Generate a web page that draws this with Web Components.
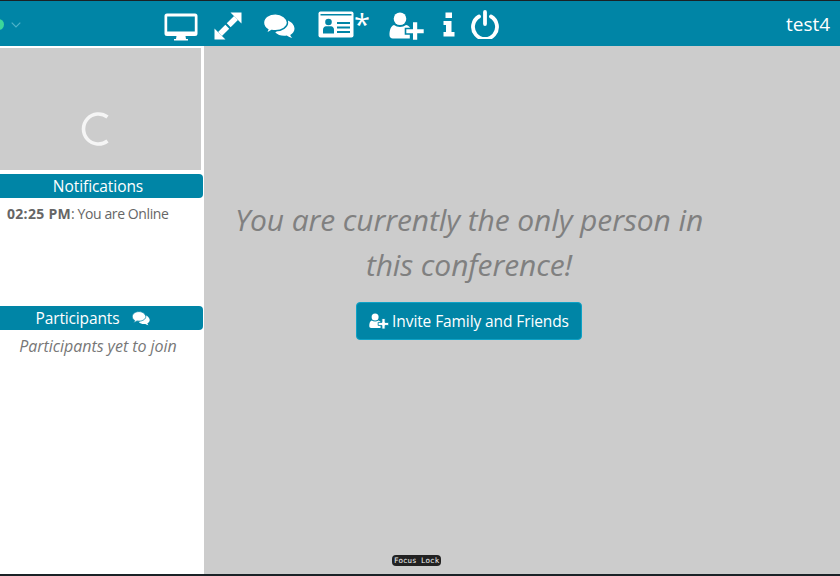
<!DOCTYPE html>
<html><head><meta charset="utf-8">
<style>
html,body{margin:0;padding:0;height:100%;overflow:hidden;background:#ccc}
body{font-family:"Open Sans","Noto Sans",sans-serif}
</style></head><body>
<conf-app>
  <top-bar slot="top" user="test4"></top-bar>
  <side-panel slot="side"></side-panel>
  <stage-area slot="main"></stage-area>
</conf-app>
<script>
const COMMENTS='<path fill="#fff" d="M25 7.500c3.600 1.600 6.500 4.600 6.500 8.200 0 2.600-1.700 4.800-4.300 6.200.4 1 1 2 2 3-2-.3-3.900-1.100-5.400-2.300-.9.200-1.800.2-2.700.2-3.600 0-6.800-1.300-8.800-3.300Z"/><path fill="#fff" stroke="#0085a6" stroke-width="1.400" d="M12.500.700C6 .700.500 4.500.500 9.700c0 2.800 1.700 5.200 4.300 6.800-.4 1.300-1.200 2.500-2.300 3.600 2.300-.3 4.600-1.300 6.300-2.700 1.100.2 2.300.3 3.700.3 6.500 0 12-3.700 12-8S19 .700 12.500.700Z"/>';
const USERPLUS='<circle cx="11" cy="6.800" r="6.300" fill="#fff"/><path fill="#fff" d="M5 13c1.700 1.300 3.700 2 6 2s4.300-.7 6-2c1.500.3 2.800 1 3.800 2.200V26.500H3.800C1.800 26.500.500 25 .500 23c0-4.500 1-8.800 4.500-10Z"/><path fill="#fff" stroke="#0085a6" stroke-width="1.600" d="M23.200 9.500H29V16.500H35.500V22H29V28.500H23.200V22H16.500V16.500H23.200Z"/>';
const ICONS={
 desktop:'<svg width="34" height="28" viewBox="0 0 34 28"><path fill="#fff" fill-rule="evenodd" d="M3 0.500H31A2.500 2.500 0 0 1 33.500 3V20.500A2.500 2.500 0 0 1 31 23H21.500L22 26H24V27.500H10V26H12L12.500 23H3A2.500 2.500 0 0 1 .5 20.500V3A2.500 2.500 0 0 1 3 .5ZM3.200 3.500V18.500H30.800V3.500Z"/></svg>',
 expand:'<svg width="28" height="28" viewBox="0 0 28 28"><path fill="#fff" d="M16.500 .5H27.500V11.500ZM.5 16.500L11.500 27.500H.5Z"/><path stroke="#fff" stroke-width="5.500" d="M22 6 14.700 13.300M6 22 13.300 14.700"/></svg>',
 comments:'<svg width="32" height="26" viewBox="0 0 32 26">'+COMMENTS+'</svg>',
 card:'<svg width="36" height="27" viewBox="0 0 36 27"><rect x=".5" y=".5" width="35" height="26" rx="2" fill="#fff"/><path fill="#0085a6" d="M2.500 3H33.500V4.500H2.500Z"/><circle cx="10.500" cy="11" r="3.300" fill="#0085a6"/><path fill="#0085a6" d="M5 22.500V18.500c0-2 1.500-3.300 3-3.300h5c1.500 0 3 1.300 3 3.300v4Z"/><path fill="#0085a6" d="M19 11H32V13H19ZM19 15.500H32V17.500H19ZM19 20H32V22H19Z"/></svg>',
 userplus:'<svg width="36" height="28" viewBox="0 0 36 28">'+USERPLUS+'</svg>',
 info:'<svg width="12" height="25" viewBox="0 0 12 25"><path fill="#fff" d="M2.500 .5H9V6H2.500ZM.5 9H8.500V20H11.500V24.500H.5V20H3V13H.5Z"/></svg>',
 power:'<svg width="28" height="29" viewBox="0 0 28 29"><path fill="none" stroke="#fff" stroke-width="3.800" stroke-linecap="round" d="M8 6.500A12 12 0 1 0 20 6.500"/><path fill="none" stroke="#fff" stroke-width="3.800" stroke-linecap="round" d="M14 2V14"/></svg>'
};
class TopBar extends HTMLElement{
 constructor(){super();const s=this.attachShadow({mode:'open'});
 s.innerHTML=`<style>
 :host{display:flex;align-items:center;height:45px;background:#0085a6;border-top:1px solid #1a2226;color:#fff;position:relative}
 .status{display:flex;align-items:center;width:164px;flex:none}
 .dot{width:11px;height:11px;border-radius:50%;background:#3cd79a;margin-left:-7px;margin-top:1px;flex:none}
 .chev{margin-left:7px;margin-top:3px}
 .icons{display:flex;align-items:center;height:100%}
 .i{display:flex;align-items:center;line-height:0}
 .star{font:400 29px "Open Sans",sans-serif;line-height:1;align-self:flex-start;margin-top:8px;margin-left:0;color:#fff}
 .user{margin-left:auto;font-size:19px;padding-right:10px;letter-spacing:-.05px}
 </style>
 <div class="status"><span class="dot"></span><svg class="chev" width="10" height="6" viewBox="0 0 10 6"><path d="M.7.7 5 5 9.300.7" fill="none" stroke="#4fb3c9" stroke-width="1.200"/></svg></div>
 <div class="icons">
  <span class="i" style="margin-top:6px">${ICONS.desktop}</span>
  <span class="i" style="margin-left:16px;margin-top:4px">${ICONS.expand}</span>
  <span class="i" style="margin-left:21px;margin-top:5px">${ICONS.comments}</span>
  <span class="i" style="margin-left:23px;margin-top:2px">${ICONS.card}</span>
  <span class="star">*</span>
  <span class="i" style="margin-left:19px;margin-top:4px">${ICONS.userplus}</span>
  <span class="i" style="margin-left:18px;margin-top:2px">${ICONS.info}</span>
  <span class="i" style="margin-left:16px;margin-top:1px">${ICONS.power}</span>
 </div>
 <span class="user">${this.getAttribute('user')}</span>`;}
}
class PanelHead extends HTMLElement{
 constructor(){super();const s=this.attachShadow({mode:'open'});
 s.innerHTML=`<style>
 :host{display:flex;align-items:center;justify-content:center;gap:13px;height:24px;background:#0085a6;color:#fff;font-size:15.500px;border-radius:0 4px 4px 0;letter-spacing:-.07px;margin-right:1px}
 :host([offset]){padding-right:10px;letter-spacing:-.15px}
 </style><slot></slot>`;}
}
class SidePanel extends HTMLElement{
 constructor(){super();const s=this.attachShadow({mode:'open'});
 s.innerHTML=`<style>
 :host{display:flex;flex-direction:column;width:211px;margin-left:-7px;background:#fff;height:100%;box-sizing:border-box;padding-top:2px}
 .video{height:122px;width:208px;background:#ccc;display:flex;align-items:center;justify-content:center;flex:none}
 .video svg{margin-top:40px;margin-left:-3px}
 .gap{height:4px;flex:none}
 .notif{height:108px;flex:none;box-sizing:border-box;padding:7px 0 0 14px;font-size:14px;color:#666;letter-spacing:-.4px;line-height:18px}
 .notif b{font-weight:700;letter-spacing:.3px}
 .yet{text-align:center;font-style:italic;font-size:16px;color:#777;line-height:20px;padding-top:6px;margin-left:-1px;letter-spacing:-.04px}
 </style>
 <div class="video"><svg width="34" height="38" viewBox="0 0 34 38"><path d="M28.500 7A15 15 0 1 0 28.500 31" fill="none" stroke="#f5f5f5" stroke-width="3.600"/></svg></div>
 <div class="gap"></div>
 <panel-head>Notifications</panel-head>
 <div class="notif"><b>02:25 PM</b>: You are Online</div>
 <panel-head offset><span>Participants</span><svg width="18" height="15" viewBox="0 0 32 26">${COMMENTS}</svg></panel-head>
 <div class="yet">Participants yet to join</div>`;}
}
class InviteButton extends HTMLElement{
 constructor(){super();const s=this.attachShadow({mode:'open'});
 s.innerHTML=`<style>
 :host{display:inline-flex;align-items:center;gap:3px;box-sizing:border-box;height:38px;width:226px;justify-content:center;background:#0085a6;border:1px solid #0ea2c6;border-radius:4px;color:#fff;font-size:15.500px;letter-spacing:-.1px}
 </style><svg width="20" height="16" viewBox="0 0 36 28">${USERPLUS}</svg><slot></slot>`;}
}
class StageArea extends HTMLElement{
 constructor(){super();const s=this.attachShadow({mode:'open'});
 s.innerHTML=`<style>
 :host{display:flex;flex-direction:column;align-items:center;flex:1;background:#ccc;height:100%;position:relative;box-sizing:border-box;padding:151px 106px 0 0}
 .wrap{width:530px;display:flex;flex-direction:column;align-items:center}
 h2{margin:0;font-weight:400;font-style:italic;font-size:30px;line-height:45px;color:#808080;text-align:center;letter-spacing:-.1px;width:490px}
 invite-button{margin-top:15px}
 .lock{position:absolute;left:188px;bottom:8px;background:#222;color:#f2f2f2;font:400 7.500px/11px "DejaVu Sans Mono",monospace;padding:0 2px;border-radius:4px;white-space:pre}
 </style>
 <div class="wrap"><h2>You are currently the only person in this conference!</h2>
 <invite-button>Invite Family and Friends</invite-button></div>
 <span class="lock">Focus Lock</span>`;}
}
class ConfApp extends HTMLElement{
 constructor(){super();const s=this.attachShadow({mode:'open'});
 s.innerHTML=`<style>
 :host{display:flex;flex-direction:column;height:576px;width:840px;overflow:hidden;box-sizing:border-box;border-bottom:2px solid #1a2226}
 .row{display:flex;flex:1;min-height:0;height:528px}
 </style><slot name="top"></slot><div class="row"><slot name="side"></slot><slot name="main"></slot></div>`;}
}
customElements.define('top-bar',TopBar);
customElements.define('panel-head',PanelHead);
customElements.define('side-panel',SidePanel);
customElements.define('invite-button',InviteButton);
customElements.define('stage-area',StageArea);
customElements.define('conf-app',ConfApp);
</script>
</body></html>
